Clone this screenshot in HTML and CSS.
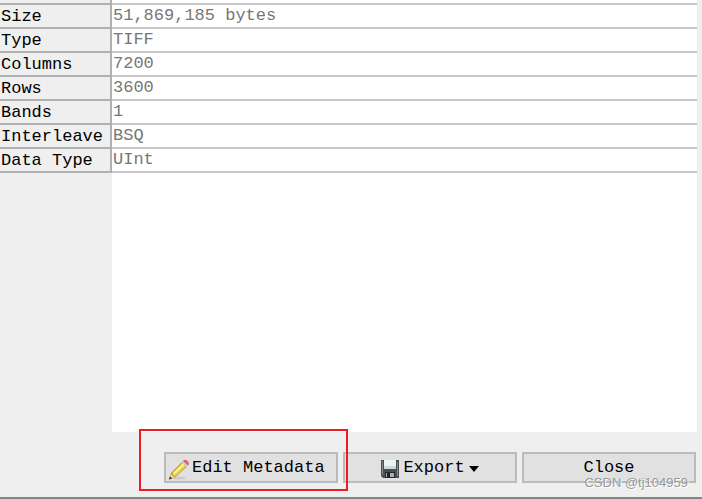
FILE: index.html
```html
<!DOCTYPE html>
<html lang="en">
<head>
  <meta charset="UTF-8">
  <title>Metadata</title>
  <link rel="stylesheet" href="styles.css">
</head>
<body>
  <main class="sheet">
    <table class="props">
      <tr class="cut"><th></th><td></td></tr>
      <tr><th scope="row">Size</th><td>51,869,185 bytes</td></tr>
      <tr><th scope="row">Type</th><td>TIFF</td></tr>
      <tr><th scope="row">Columns</th><td>7200</td></tr>
      <tr><th scope="row">Rows</th><td>3600</td></tr>
      <tr><th scope="row">Bands</th><td>1</td></tr>
      <tr><th scope="row">Interleave</th><td>BSQ</td></tr>
      <tr><th scope="row">Data Type</th><td>UInt</td></tr>
    </table>
  </main>

  <footer class="actions">
    <div class="marked">
      <button type="button" class="btn edit">
        <svg class="icon-pencil" viewBox="0 0 22 22" aria-hidden="true">
          <ellipse cx="10" cy="19" rx="8" ry="1.500" fill="#cccccc"/>
          <path d="M1 20.500L3 14L15 2L20 6.500L7 18.500Z" fill="#b08a28"/>
          <path d="M4 14L14.500 3.500L18.500 7L7 18Z" fill="#e9cf42"/>
          <path d="M5 14.500L15 4.500L16.500 6L6 16Z" fill="#fff29a"/>
          <path d="M1 20.500L3 14.500L7 18.500Z" fill="#e8cda0"/>
          <path d="M1 20.500L2 17.500L4 19.500Z" fill="#222"/>
          <path d="M13.500 3.500L15 2L20 6.500L18.500 8Z" fill="#c9d2d8"/>
          <path d="M15 2Q17 0 19 1.500L20.500 3Q21.500 5 20 6.500Z" fill="#e4606a"/>
        </svg>
        <span>Edit Metadata</span>
      </button>
    </div>
    <button type="button" class="btn">
      <svg class="icon-disk" viewBox="0 0 18 18" aria-hidden="true">
        <path d="M0 0H18V18H2L0 16Z" fill="#4a4e50"/>
        <path d="M1 1H2V15H1ZM16 2H17V16H16Z" fill="#858989"/>
        <path d="M3 0H15V9H3Z" fill="#e9f5f3"/>
        <path d="M3 6H15V9H3Z" fill="#c9dcda"/>
        <path d="M4 12H14V18H4Z" fill="#25292b"/>
        <path d="M5 13H13V17H5Z" fill="#a9adae"/>
        <path d="M6 13H9V17H6Z" fill="#222"/>
      </svg>
      <span>Export</span>
      <svg class="icon-arrow" viewBox="0 0 10 6" aria-hidden="true"><path d="M0 0H10L5 6Z"/></svg>
    </button>
    <button type="button" class="btn">Close</button>
  </footer>
  <span class="watermark">CSDN @tj104959</span>
</body>
</html>
```
FILE: styles.css
```css
* {
  box-sizing: border-box;
}

body {
  position: relative;
  display: flex;
  flex-direction: column;
  min-height: 100vh;
  margin: 0;
  background: #efefef;
  border-bottom: 1px solid #d0d0d0;
  font-family: "Liberation Mono", monospace;
  font-size: 17px;
}

/* grey label column on the left, white value column on the right */
.sheet {
  flex: 1;
  margin-right: 5px;
  background: linear-gradient(to right, #efefef 112px, #fff 112px);
}

.props {
  width: 100%;
  table-layout: fixed;
  border-collapse: separate;
  border-spacing: 0;
}

.props th,
.props td {
  height: 24px;
  padding: 0 1px;
  line-height: 20px;
  text-align: left;
  vertical-align: top;
  font-weight: normal;
  white-space: nowrap;
}

.props th {
  width: 112px;
  padding-top: 2px;
  color: #000;
  border-right: 2px solid #b0b0b0;
  border-bottom: 2px solid #b0b0b0;
}

.props td {
  padding-top: 1px;
  color: #777;
  border-bottom: 2px solid #c8c8c8;
}

.props .cut th,
.props .cut td {
  height: 5px;
  padding: 0;
}

.actions {
  display: grid;
  grid-template-columns: repeat(3, 174px);
  justify-content: end;
  gap: 5px;
  padding: 20px 6px 14px;
  border-bottom: 2px solid #858585;
}

.btn {
  display: flex;
  align-items: center;
  justify-content: center;
  width: 100%;
  height: 31px;
  padding: 0 4px;
  background: #e1e1e1;
  border: 2px solid #bbb;
  color: #000;
  font: inherit;
}

.edit {
  justify-content: flex-start;
  gap: 2px;
  padding: 0 2px;
}

.marked {
  position: relative;
}

.marked::after {
  content: "";
  position: absolute;
  inset: -23px -10px -8px -25px;
  border: 2px solid #ee1c25;
  pointer-events: none;
  z-index: 1;
}

.icon-pencil {
  width: 22px;
  height: 22px;
  margin-top: 4px;
}

.icon-disk {
  width: 18px;
  height: 18px;
  margin: 2px 4px 0 0;
}

.icon-arrow {
  width: 10px;
  height: 6px;
  margin: 2px 0 0 4px;
}

.watermark {
  position: absolute;
  right: 14px;
  bottom: 8px;
  font: 13px/16px "Liberation Sans", sans-serif;
  color: #999;
  text-shadow: 1px 1px 0 #fff;
}
```
